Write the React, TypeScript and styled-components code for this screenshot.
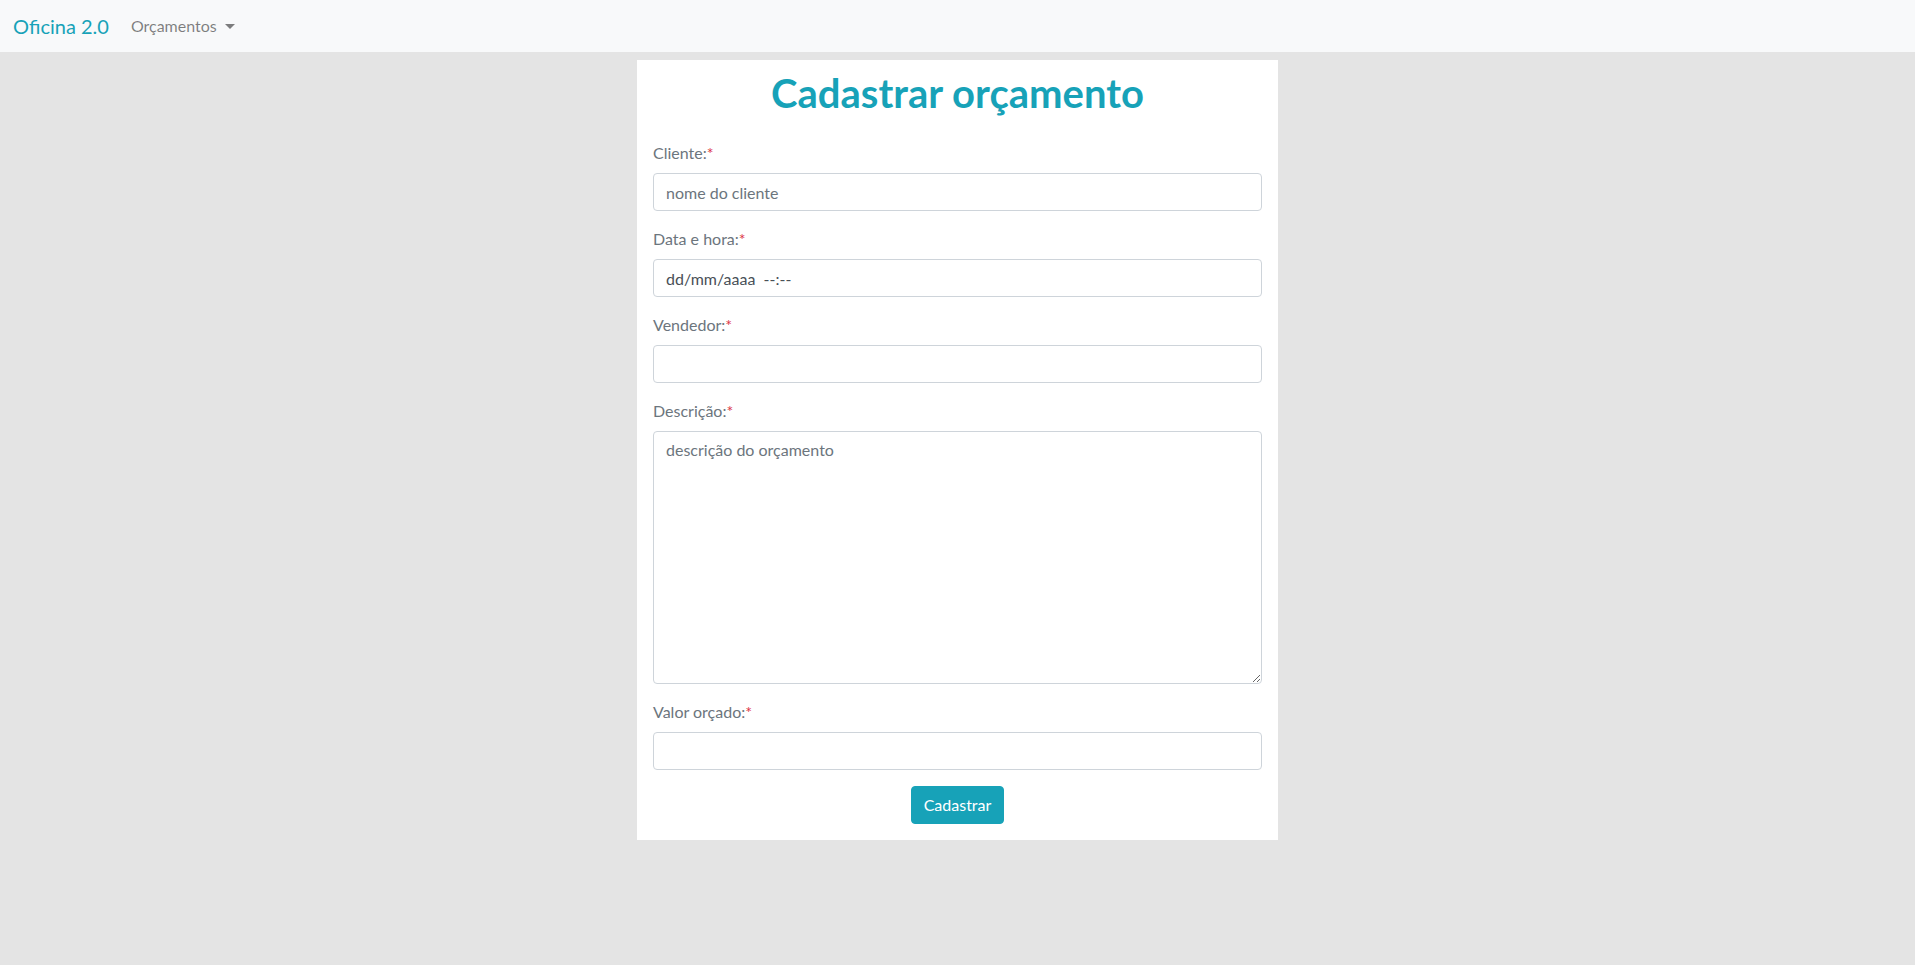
import React from 'react';
import styled, { createGlobalStyle } from 'styled-components';

const GlobalStyle = createGlobalStyle`
  * {
    box-sizing: border-box;
  }

  body {
    margin: 0;
    background: #e4e4e4;
    font-family: Lato, 'Open Sans', sans-serif;
    font-size: 16px;
    line-height: 1.5;
    color: #212529;
  }
`;

const Navbar = styled.nav`
  display: flex;
  align-items: center;
  height: 52px;
  padding: 0 16px 0 13px;
  background: #f8f9fa;
`;

const Brand = styled.a`
  font-size: 20px;
  line-height: 30px;
  color: #17a2b8;
  margin-right: 14px;
  text-decoration: none;
`;

const NavLink = styled.a`
  display: flex;
  align-items: center;
  padding: 8px;
  color: rgba(0, 0, 0, 0.5);
  text-decoration: none;

  &::after {
    content: '';
    display: inline-block;
    margin-left: 8px;
    border-top: 5px solid;
    border-left: 5px solid transparent;
    border-right: 5px solid transparent;
  }
`;

const Card = styled.form`
  width: 641px;
  margin: 8px auto 0;
  padding: 0 16px 16px;
  background: #fff;
`;

const Title = styled.h1`
  margin: 0;
  padding: 9px 0 24px;
  font-size: 40px;
  font-weight: 700;
  line-height: 48px;
  text-align: center;
  color: #17a2b8;
`;

const Group = styled.div`
  margin-bottom: 16px;
`;

const Label = styled.label`
  display: block;
  margin-bottom: 8px;
  color: #6c757d;
`;

const Required = styled.span`
  color: #dc3545;
`;

const Input = styled.input<{ $dark?: boolean }>`
  display: block;
  width: 100%;
  height: 38px;
  padding: 6px 12px;
  font-family: inherit;
  font-size: 16px;
  line-height: 1.5;
  color: #495057;
  background: #fff;
  border: 1px solid #ced4da;
  border-radius: 4px;
  outline: none;

  &::placeholder {
    color: ${(p) => (p.$dark ? '#495057' : '#6c757d')};
    opacity: 1;
  }
`;

const TextArea = styled.textarea`
  display: block;
  width: 100%;
  height: 253px;
  padding: 6px 12px;
  font-family: inherit;
  font-size: 16px;
  line-height: 1.5;
  color: #495057;
  background: #fff;
  border: 1px solid #ced4da;
  border-radius: 4px;
  outline: none;

  &::placeholder {
    color: #6c757d;
    opacity: 1;
  }
`;

const Actions = styled.div`
  display: flex;
  justify-content: center;
`;

const Button = styled.button`
  padding: 6px 12px;
  font-family: inherit;
  font-size: 16px;
  line-height: 1.5;
  color: #fff;
  background: #17a2b8;
  border: 1px solid #17a2b8;
  border-radius: 4px;
  cursor: pointer;
`;

type FieldProps = {
  label: string;
  children: React.ReactNode;
};

function Field({ label, children }: FieldProps) {
  return (
    <Group>
      <Label>
        {label}
        <Required>*</Required>
      </Label>
      {children}
    </Group>
  );
}

export default function App() {
  return (
    <>
      <GlobalStyle />
      <Navbar>
        <Brand href="#">Oficina 2.0</Brand>
        <NavLink href="#">Orçamentos</NavLink>
      </Navbar>
      <Card onSubmit={(e) => e.preventDefault()}>
        <Title>Cadastrar orçamento</Title>
        <Field label="Cliente:">
          <Input type="text" placeholder="nome do cliente" />
        </Field>
        <Field label="Data e hora:">
          <Input type="text" $dark placeholder="dd/mm/aaaa  --:--" />
        </Field>
        <Field label="Vendedor:">
          <Input type="text" />
        </Field>
        <Field label="Descrição:">
          <TextArea placeholder="descrição do orçamento" />
        </Field>
        <Field label="Valor orçado:">
          <Input type="text" />
        </Field>
        <Actions>
          <Button type="submit">Cadastrar</Button>
        </Actions>
      </Card>
    </>
  );
}
